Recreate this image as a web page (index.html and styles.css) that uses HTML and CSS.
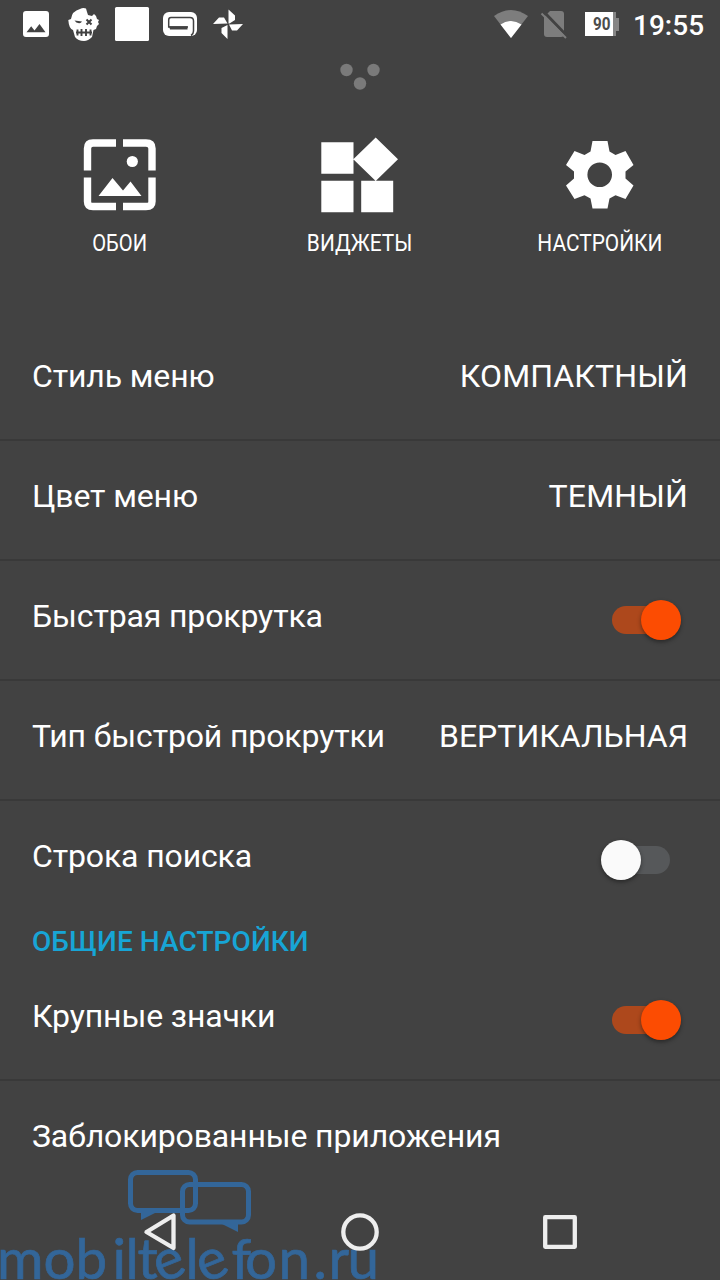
FILE: index.html
```html
<!DOCTYPE html>
<html lang="ru">
<head>
<meta charset="utf-8">
<title>Настройки</title>
<link rel="stylesheet" href="styles.css">
</head>
<body>
<main class="screen">
  <header class="status">
    <svg class="status-left" viewBox="0 0 260 50">
      <path fill="#fff" fill-rule="evenodd" d="M26 11H46Q49 11 49 14V34Q49 37 46 37H26Q23 37 23 34V14Q23 11 26 11ZM26.5 32.3H45.5L39.5 24 34.5 30.4 31.2 26.2Z"/>
      <path fill="#fff" d="M71 19Q72 11 80 9Q83 7.500 86 8.500L87 12 88 15 92 16 94 14 96 16 97 19 99 20 98 22 99 24 97 26 96 29 93.500 30 92 37Q88 41 84 41Q78 41 75 37L73 30Q69 29 68.300 20Z"/>
      <path fill="#424242" d="M74.500 20.500L82 21.500Q81 23.500 79 23.300Q76 23 74.500 20.500Z"/>
      <path stroke="#424242" stroke-width="2" fill="none" d="M86.500 19.500L91.500 24.500M91.500 19.500L86.500 24.500"/>
      <path stroke="#424242" stroke-width="1.900" fill="none" d="M76 32.500H92M77.500 29.500V35.500M81.500 29V36M86 29V36M90.500 29.500V35.500"/>
      <rect x="115" y="7" width="34" height="34" rx="1.500" fill="#fff"/>
      <rect x="163" y="12" width="34" height="24" rx="6" fill="#fff"/>
      <path d="M188 27H168.700V20Q168.700 17.500 171 17.500H190Q193.500 17.500 193.500 21V31Q193.500 34 191 35.500" stroke="#424242" stroke-width="1.500" fill="none"/>
      <path d="M169 26.300H187.500V29.500H170Z" fill="#424242"/>
      <path d="M228.500 9.500L235 15.500V20L229.500 23.500H228.500ZM227.500 39L221.500 33V28L227.500 25ZM213 24L219 17.500H224L227.500 23.500ZM243 24L237 30.500H232L229 24.500Z" fill="#fff"/>
    </svg>
    <svg class="status-right" viewBox="0 0 150 50">
      <path fill="#7d7d7d" d="M14 16Q31 4 48 16L31 38Z"/>
      <path fill="#fff" d="M20.500 24.500Q31 17.500 41.500 24.500L31 38Z"/>
      <path fill="#7d7d7d" d="M64 17L70 11H81Q84 11 84 14V34Q84 37 81 37H67Q64 37 64 34Z"/>
      <path d="M64 12L88 37" stroke="#424242" stroke-width="3"/>
      <path d="M61.500 13.500L86 38" stroke="#7d7d7d" stroke-width="2"/>
      <path fill="#858585" d="M132 12H136V18H139V31H136V36H132Z"/>
      <path fill="#fff" d="M105 12H133V36H105Z"/>
      <text x="113" y="30.300" class="battery-text" textLength="17.500" lengthAdjust="spacingAndGlyphs">90</text>
    </svg>
    <span class="clock">19:55</span>
  </header>
  <svg class="dots" viewBox="0 0 40 28"><g fill="#7a7a7a"><circle cx="6.500" cy="7" r="6.200"/><circle cx="33.500" cy="7" r="6.200"/><circle cx="20" cy="20.500" r="6.200"/></g></svg>
  <nav class="actions">
    <div class="action">
      <svg class="action-icon" viewBox="0 0 80 80">
        <path d="M36 7H13Q7.500 7 7.500 12.500V34.500M43 7H66Q72 7 72 12.500V34.500M7.500 41.500V65.500Q7.500 70.500 13 70.500H36M43 70.500H66Q72 70.500 72 65.500V41.500" fill="none" stroke="#fff" stroke-width="7.400"/>
        <circle cx="52.300" cy="25.500" r="5.600" fill="#fff"/>
        <path d="M18.500 60L32.500 42 43 54.500 50.500 45.500 61.500 60Z" fill="#fff"/>
      </svg>
      <span class="action-label">ОБОИ</span>
    </div>
    <div class="action">
      <svg class="action-icon" viewBox="0 0 80 80"><path fill="#fff" d="M1.300 6.300H33.500V37.700H1.300ZM1.300 44.800H33.500V76.200H1.300ZM41.200 44.800H73.200V76.200H41.200ZM55.700 1.500L78 23.200 55.700 45 33.300 23.200Z"/></svg>
      <span class="action-label wide">ВИДЖЕТЫ</span>
    </div>
    <div class="action">
      <svg class="action-icon" viewBox="0 0 80 80">
        <path fill="#fff" fill-rule="evenodd" d="M32.500 5H47.500L49.500 15.500 55.500 19 65.500 15 73.500 29 65.500 35.500V42.500L73.500 49.500 65.500 63 55.500 59.300 49.500 62.500 47.500 72.500H32.500L30.500 62.500 24.500 59.300 14.500 63 6 49.500 14 42.500V35.500L6 29 14.500 15 24.500 19 30.500 15.500ZM39.700 26.500A12.300 12.300 0 1 0 39.700 51.100A12.300 12.300 0 1 0 39.700 26.500Z"/>
      </svg>
      <span class="action-label wide">НАСТРОЙКИ</span>
    </div>
  </nav>
  <section class="settings">
    <div class="row"><span class="name">Стиль меню</span><span class="value">КОМПАКТНЫЙ</span></div>
    <div class="row"><span class="name">Цвет меню</span><span class="value">ТЕМНЫЙ</span></div>
    <div class="row"><span class="name">Быстрая прокрутка</span><i class="switch on"></i></div>
    <div class="row"><span class="name">Тип быстрой прокрутки</span><span>ВЕРТИКАЛЬНАЯ</span></div>
    <div class="row short"><span class="name">Строка поиска</span><i class="switch"></i></div>
    <h2 class="heading">ОБЩИЕ НАСТРОЙКИ</h2>
    <div class="row"><span class="name">Крупные значки</span><i class="switch on"></i></div>
    <div class="row last"><span class="name">Заблокированные приложения</span></div>
  </section>
  <svg class="overlay" viewBox="0 1160 720 120">
    <g fill="none" stroke="#336699" stroke-width="5">
      <rect x="130.500" y="1172.500" width="65" height="38" rx="7"/>
      <rect x="182.500" y="1184.500" width="66" height="37.500" rx="7"/>
    </g>
    <path fill="#336699" d="M141 1212H157L141 1220ZM222 1224H238V1232Z"/>
    <text class="brand" y="1279 1279 1279 1279 1279 1279 1283.500 1279 1283.500 1279" x="-3 43.500 75.500 112.500 125.500 137.500 161 185.500 204 231.500 245 278.500 313.500 328.500 347.500" rotate="0 0 0 0 0 0 -22 0 -22 0">mobiltelefon.ru</text>
    <g fill="none" stroke="#eee" stroke-width="4.300" stroke-linejoin="round">
      <path d="M146.500 1232L173.500 1215.500V1248Z"/>
      <circle cx="360" cy="1232" r="16.700"/>
      <rect x="545.200" y="1217.200" width="29.600" height="29.600"/>
    </g>
  </svg>
</main>
</body>
</html>
```
FILE: styles.css
```css
* { box-sizing: border-box; }
body { margin: 0; background: #424242; color: #fff; font-family: Roboto, "Noto Sans", sans-serif; }
.screen { position: relative; display: flex; flex-direction: column; width: 720px; height: 1280px; overflow: hidden; }
.status { display: flex; height: 50px; flex: none; }
.status-left { width: 260px; height: 50px; }
.status-right { width: 150px; height: 50px; margin-left: 220px; }
.battery-text { font: 700 18px Roboto, sans-serif; fill: #4c4c4c; }
.clock { margin-left: 3px; font-size: 28px; font-weight: 500; line-height: 51px; }
.dots { width: 40px; height: 28px; flex: none; margin: 13px auto 0; }
.actions { display: grid; grid-template-columns: repeat(3, 1fr); height: 230px; padding-top: 45px; flex: none; }
.action { display: flex; flex-direction: column; align-items: center; }
.action-icon { width: 80px; height: 80px; }
.action-label { margin-top: 12px; font-size: 24px; line-height: 30px; transform: scaleX(.84); }
.action-label.wide { transform: scaleX(.87); }
.settings { flex: none; }
.row { display: flex; justify-content: space-between; height: 120px; padding: 36px 32px 0; border-bottom: 2px solid #393939; font-size: 32px; line-height: 38px; white-space: nowrap; }
.row.short { height: 118px; border: 0; }
.row.last { border: 0; }
.name { letter-spacing: -.13px; }
.value { letter-spacing: .15px; }
.heading { height: 42px; margin: 0; padding: 5px 32px 0; color: #17a5d6; font-size: 28px; font-weight: 500; line-height: 36px; letter-spacing: .08px; }
.switch { position: relative; width: 58px; height: 28px; margin: 9px 18px 0 0; border-radius: 14px; background: #56585a; }
.switch::after { content: ""; position: absolute; left: -11px; top: -6px; width: 40px; height: 40px; border-radius: 50%; background: #fafafa; box-shadow: 0 2px 4px rgba(0, 0, 0, .4); }
.switch.on { background: #ad481c; }
.switch.on::after { left: 29px; background: #fc4c02; }
.overlay { position: absolute; left: 0; bottom: 0; width: 720px; height: 120px; }
.brand { font: 400 56.5px Lato, sans-serif; fill: #336699; stroke: #336699; stroke-width: .7px; }
```
